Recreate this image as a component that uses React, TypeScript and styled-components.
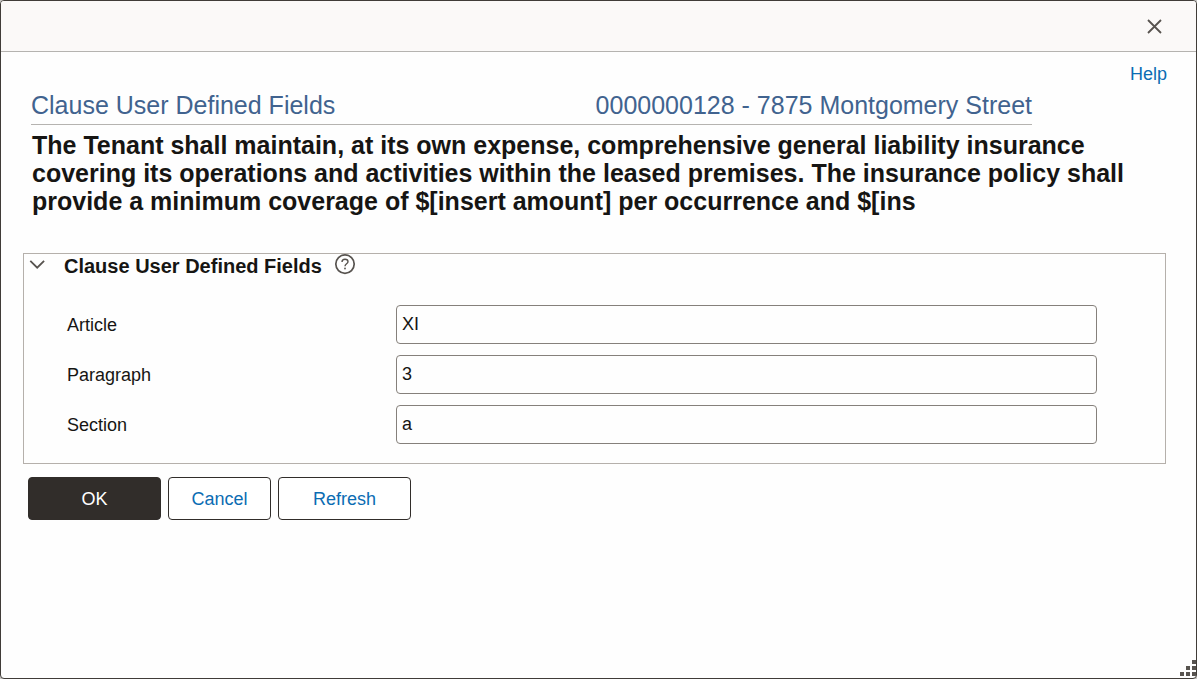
import React, { useState } from "react";
import styled, { createGlobalStyle } from "styled-components";

const GlobalStyle = createGlobalStyle`
  *, *::before, *::after { box-sizing: border-box; }
  body {
    margin: 0;
    background: #c9c7c5;
    color: #161513;
    font-family: "Liberation Sans", Arial, sans-serif;
    font-size: 18px;
    line-height: 20px;
  }
`;

const Dialog = styled.div`
  position: relative;
  display: flex;
  flex-direction: column;
  min-height: 100vh;
  border: 1px solid #403c38;
  border-radius: 4px;
  background: #fefefe;
  overflow: hidden;
`;

const TitleBar = styled.header`
  display: flex;
  align-items: center;
  justify-content: flex-end;
  height: 51px;
  padding-right: 30px;
  border-bottom: 1px solid #b5b3b0;
  background: #fbf9f8;
`;

const IconButton = styled.button`
  display: flex;
  align-items: center;
  justify-content: center;
  padding: 0;
  border: 0;
  background: none;
  color: #57534f;
  cursor: pointer;
`;

const Body = styled.main`
  flex: 1;
  padding: 12px 30px 24px 22px;
`;

const HelpRow = styled.div`
  display: flex;
  justify-content: flex-end;
  margin-right: -1px;
`;

const TextLink = styled.a`
  color: #0b6cb3;
  text-decoration: none;
`;

const Heading = styled.div`
  display: flex;
  justify-content: space-between;
  flex-wrap: wrap;
  margin: 7px 134px 0 8px;
  padding-bottom: 4px;
  border-bottom: 1px solid #b5b3b0;
  color: #41638f;
  font-size: 25px;
  line-height: 29px;
`;

const PageTitle = styled.h1`
  margin: 0;
  font-size: 25px;
  font-weight: 400;
`;

const ClauseText = styled.p`
  margin: 6px 24px 0 9px;
  font-size: 25px;
  font-weight: 700;
  line-height: 28px;
`;

const Group = styled.section`
  margin-top: 38px;
  padding-bottom: 19px;
  border: 1px solid #b5b0ab;
`;

const GroupHeader = styled.div`
  display: flex;
  align-items: flex-start;
  padding-left: 5px;
`;

const GroupTitle = styled.h2`
  margin: 0 12px 0 18px;
  font-size: 20px;
  font-weight: 700;
  line-height: 24px;
`;

const Fields = styled.div`
  display: grid;
  gap: 11px;
  padding: 27px 68px 0 43px;
`;

const Field = styled.div`
  display: grid;
  grid-template-columns: 329px 1fr;
  align-items: center;
`;

const TextInput = styled.input`
  width: 100%;
  height: 39px;
  padding: 0 5px;
  border: 1px solid #85807b;
  border-radius: 4px;
  background: #fefefe;
  color: inherit;
  font: inherit;
`;

const Actions = styled.div`
  display: flex;
  gap: 7px;
  padding: 13px 5px 0;
`;

const ActionButton = styled.button<{ $primary?: boolean; $wide?: boolean }>`
  width: ${(p) => (p.$wide ? 133 : 103)}px;
  height: 43px;
  padding: 0;
  border: 1px solid #312d2a;
  border-radius: 4px;
  background: ${(p) => (p.$primary ? "#312d2a" : "#ffffff")};
  color: ${(p) => (p.$primary ? "#ffffff" : "#0b6cb3")};
  font: inherit;
  cursor: pointer;
`;

const ResizeGrip = styled.svg`
  position: absolute;
  right: 0;
  bottom: 2px;
`;

const initialFields = [
  { id: "article", label: "Article", value: "XI" },
  { id: "paragraph", label: "Paragraph", value: "3" },
  { id: "section", label: "Section", value: "a" },
];

const gripDots = [
  [12, 0], [6, 6], [12, 6], [0, 12], [6, 12], [12, 12],
];

export default function App() {
  const [fields, setFields] = useState(initialFields);
  const [open, setOpen] = useState(true);

  const update = (id: string, value: string) =>
    setFields((list) => list.map((f) => (f.id === id ? { ...f, value } : f)));

  return (
    <>
      <GlobalStyle />
      <Dialog role="dialog" aria-labelledby="page-title">
        <TitleBar>
          <IconButton type="button" aria-label="Close">
            <svg width="22" height="22" viewBox="0 0 22 22" fill="none" stroke="currentColor" strokeWidth="1.8">
              <path d="M4 5 17 18M17 5 4 18" />
            </svg>
          </IconButton>
        </TitleBar>
        <Body>
          <HelpRow>
            <TextLink href="#help">Help</TextLink>
          </HelpRow>
          <Heading>
            <PageTitle id="page-title">Clause User Defined Fields</PageTitle>
            <span>0000000128 - 7875 Montgomery Street</span>
          </Heading>
          <ClauseText>
            The Tenant shall maintain, at its own expense, comprehensive general liability insurance
            covering its operations and activities within the leased premises. The insurance policy
            shall provide a minimum coverage of $[insert amount] per occurrence and $[ins
          </ClauseText>
          <Group aria-labelledby="group-title">
            <GroupHeader>
              <IconButton
                type="button"
                aria-label="Toggle section"
                aria-expanded={open}
                onClick={() => setOpen(!open)}
              >
                <svg width="17" height="22" viewBox="0 0 17 22" fill="none" stroke="currentColor" strokeWidth="1.8">
                  <path d="M1.3 6.8 8.2 13.7 15.1 6.8" />
                </svg>
              </IconButton>
              <GroupTitle id="group-title">Clause User Defined Fields</GroupTitle>
              <IconButton type="button" aria-label="Section help">
                <svg width="22" height="22" viewBox="0 0 22 22" fill="none" stroke="currentColor">
                  <circle cx="11" cy="10.1" r="9.2" strokeWidth="1.7" />
                  <path d="M8 8.1C8 6.2 9.3 5.2 11 5.2S14 6.3 14 7.8C14 9.7 11 10 11 12.2" strokeWidth="1.4" />
                  <circle cx="11" cy="14.5" r="0.9" fill="currentColor" stroke="none" />
                </svg>
              </IconButton>
            </GroupHeader>
            {open && (
              <Fields>
                {fields.map((f) => (
                  <Field key={f.id}>
                    <label htmlFor={f.id}>{f.label}</label>
                    <TextInput
                      id={f.id}
                      type="text"
                      value={f.value}
                      onChange={(e) => update(f.id, e.target.value)}
                    />
                  </Field>
                ))}
              </Fields>
            )}
          </Group>
          <Actions>
            <ActionButton type="button" $primary $wide>OK</ActionButton>
            <ActionButton type="button">Cancel</ActionButton>
            <ActionButton type="button" $wide>Refresh</ActionButton>
          </Actions>
        </Body>
        <ResizeGrip width="16" height="16" viewBox="0 0 16 16" fill="#57534f" aria-hidden="true">
          {gripDots.map(([x, y]) => (
            <rect key={`${x}-${y}`} x={x} y={y} width="4" height="4" />
          ))}
        </ResizeGrip>
      </Dialog>
    </>
  );
}
